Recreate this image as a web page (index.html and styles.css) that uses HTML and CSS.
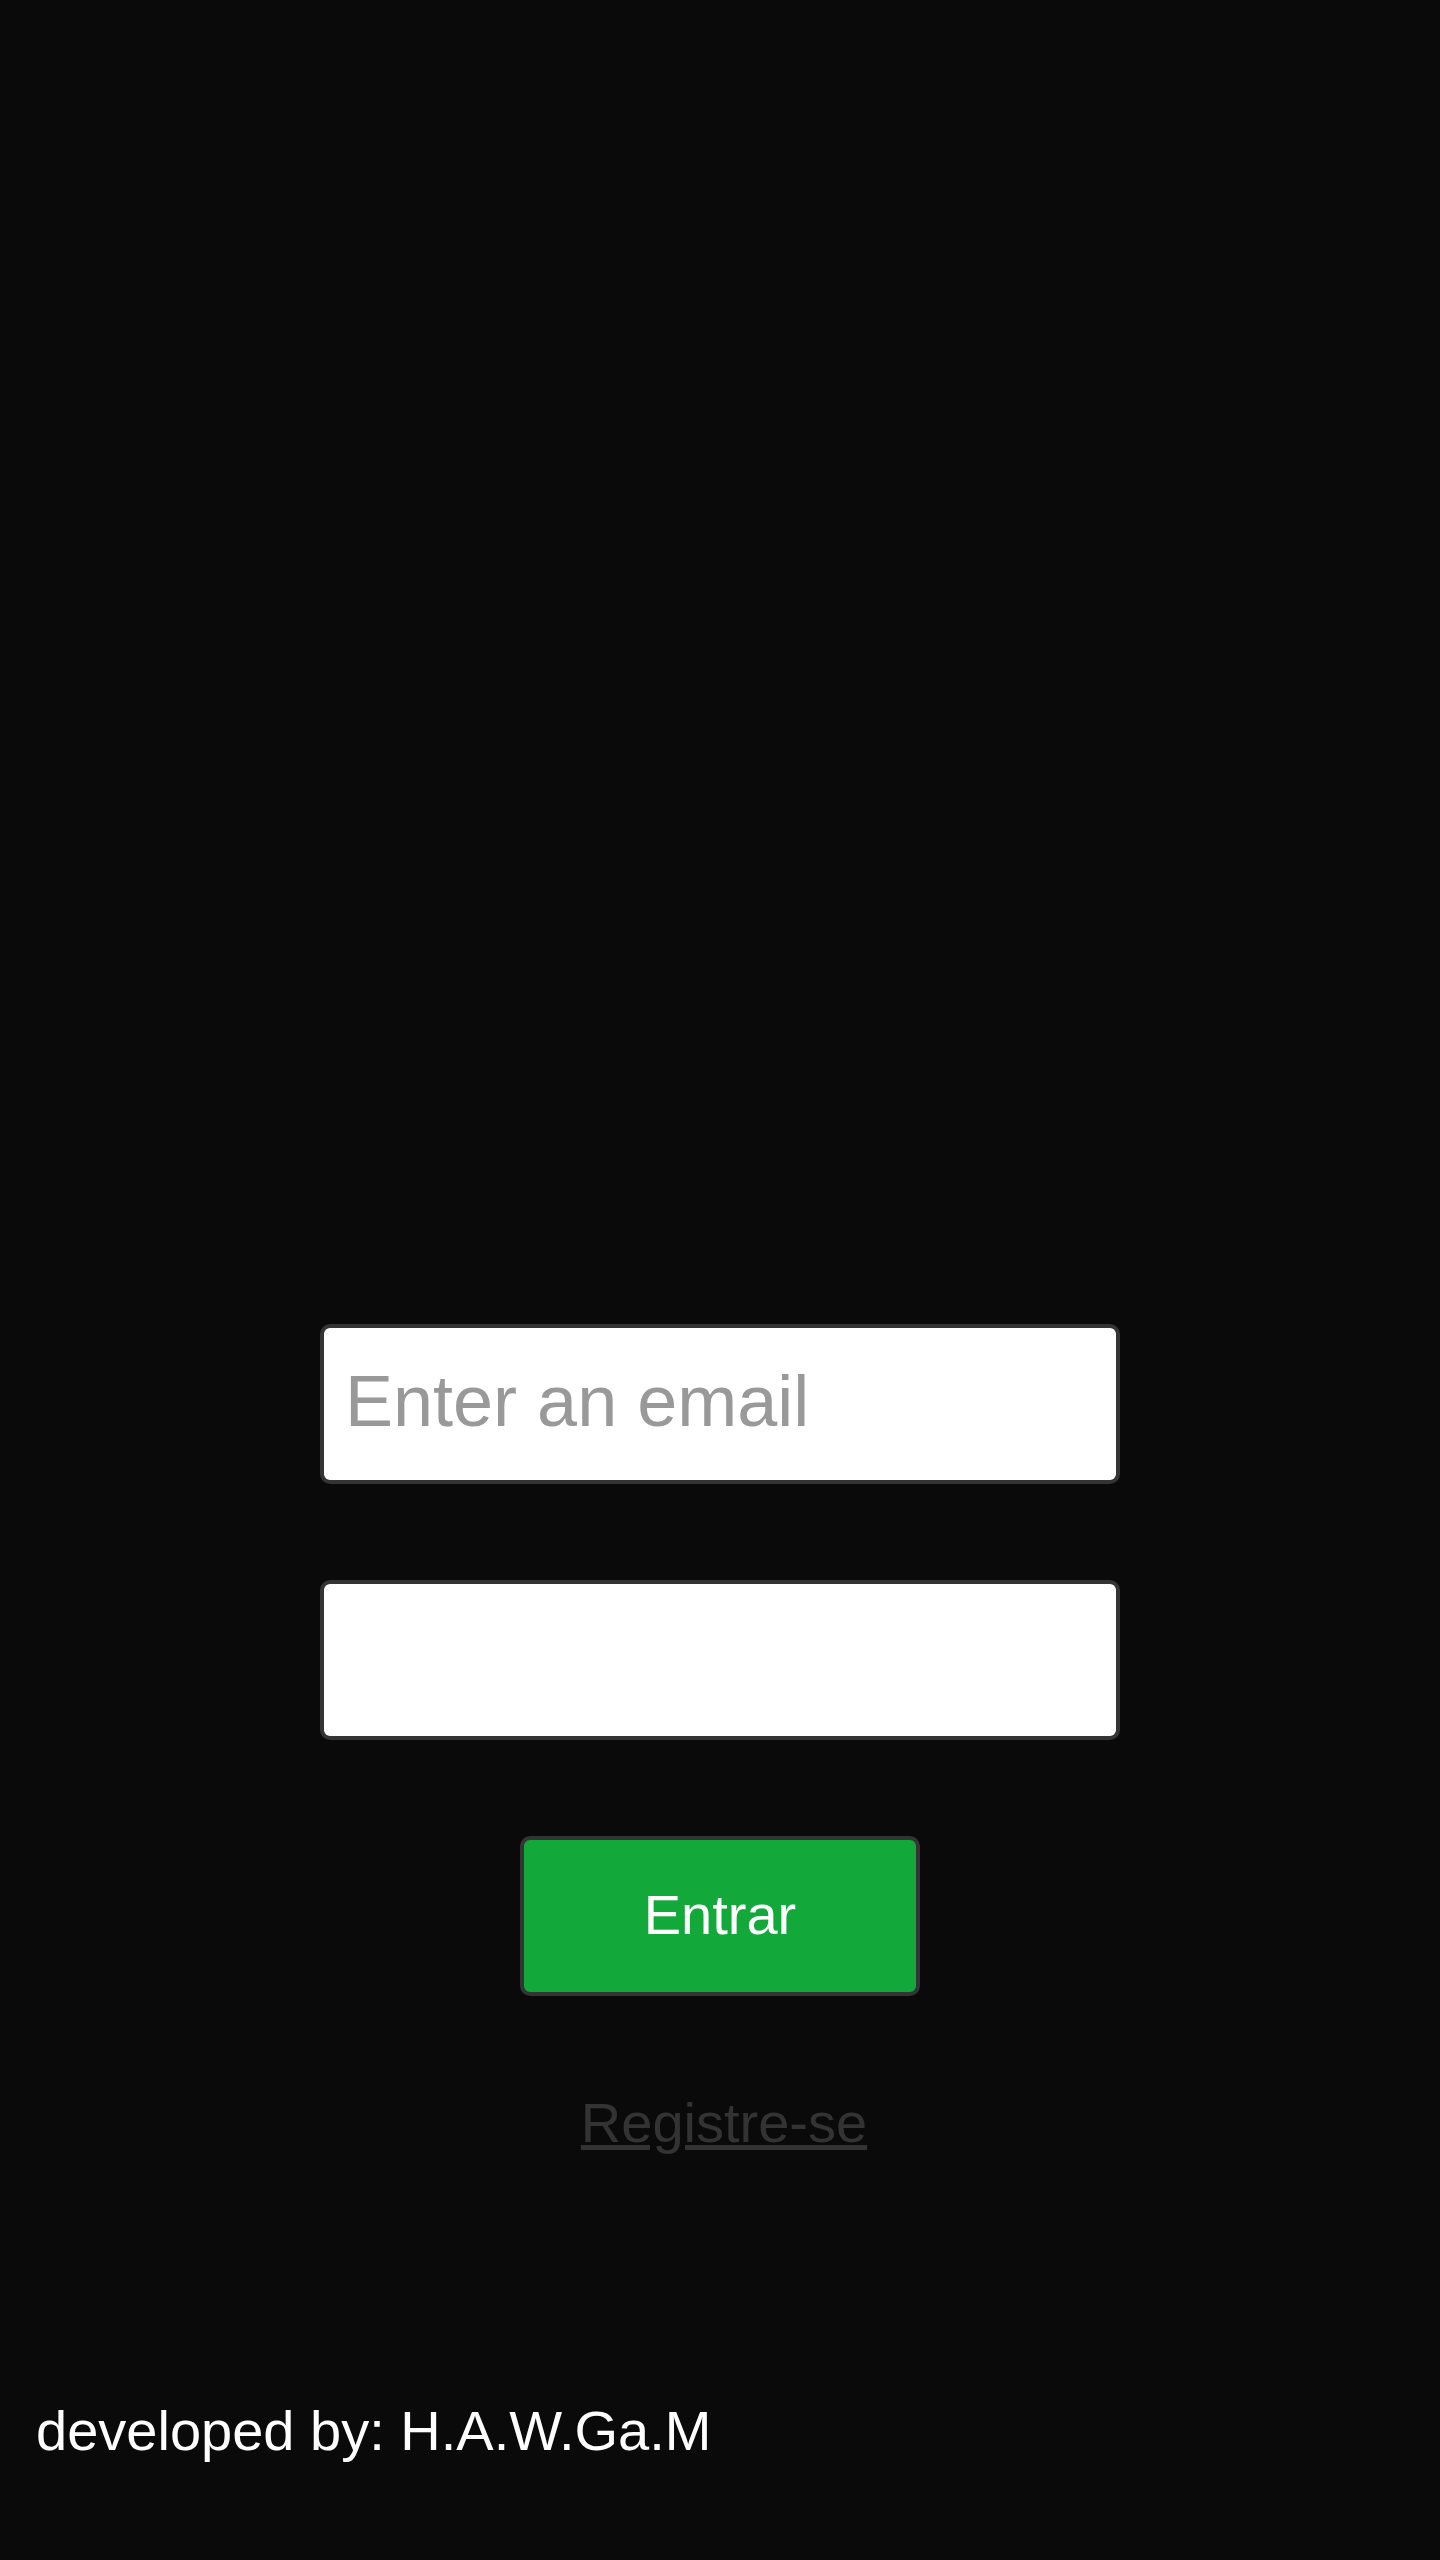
FILE: index.html
```html
<!DOCTYPE html>
<html lang="pt">
<head>
<meta charset="utf-8">
<title>Login</title>
<link rel="stylesheet" href="styles.css">
</head>
<body>
<div class="page">
  <main class="login">
    <form class="login-form" onsubmit="return false">
      <input class="field" type="email" placeholder="Enter an email">
      <input class="field" type="password">
      <button class="btn-enter" type="submit">Entrar</button>
      <a class="register-link" href="#">Registre-se</a>
    </form>
  </main>
  <footer class="footer">developed by: H.A.W.Ga.M</footer>
</div>
</body>
</html>
```

FILE: styles.css
```css
html, body {
  margin: 0;
  padding: 0;
  background: #0a0a0a;
}

body {
  font-family: "Liberation Sans", Arial, sans-serif;
}

.page {
  min-height: 2560px;
  display: flex;
  flex-direction: column;
}

.login {
  padding-top: 1324px;
  display: flex;
  justify-content: center;
}

.login-form {
  display: flex;
  flex-direction: column;
  align-items: center;
  gap: 96px;
}

.field {
  box-sizing: border-box;
  width: 800px;
  height: 160px;
  margin: 0;
  padding: 0 24px 6px 21px;
  border: 4px solid #343434;
  border-radius: 10px;
  background: #ffffff;
  color: #000000;
  font-family: "Liberation Sans", Arial, sans-serif;
  font-size: 72px;
  outline: none;
}

.field::placeholder {
  color: #999999;
}

.btn-enter {
  box-sizing: border-box;
  width: 400px;
  height: 160px;
  margin: 0;
  padding: 0 0 3px;
  border: 4px solid #343434;
  border-radius: 10px;
  background: #12a83a;
  color: #ffffff;
  font-family: "Liberation Sans", Arial, sans-serif;
  font-size: 56px;
  cursor: pointer;
}

.register-link {
  color: #333333;
  font-size: 56px;
  text-decoration: underline;
  margin: -2px 0 0 8px;
}

.footer {
  margin-top: auto;
  padding: 0 0 97px 36px;
  color: #ffffff;
  font-size: 56px;
}
```
